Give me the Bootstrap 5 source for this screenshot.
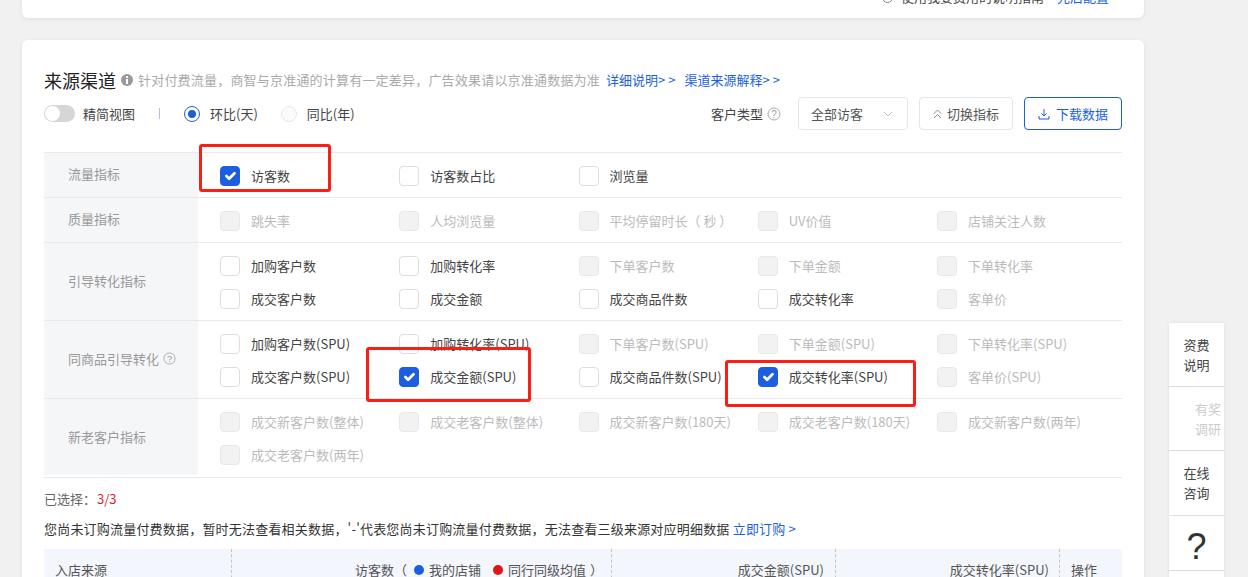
<!DOCTYPE html>
<html lang="zh">
<head>
<meta charset="utf-8">
<title>来源渠道</title>
<link href="https://cdn.jsdelivr.net/npm/bootstrap@5.3.0/dist/css/bootstrap.min.css" rel="stylesheet">
<style>
html,body{height:577px;overflow:hidden}
body{position:relative;background:#f1f1f1;font-family:"Noto Sans CJK SC","Liberation Sans",sans-serif;font-size:13px;color:#444;line-height:20px}
.page-wrap{width:1122px;margin-left:22px}
.panel{background:#fff;border-radius:6px;box-shadow:0 1px 4px rgba(0,0,0,.08)}
.panel-top{height:40px;margin-top:-22px;padding:0 35px 11px 0;white-space:nowrap}
.panel-main{margin-top:22px;padding:30px 22px 0;height:600px}
.ring{width:11px;height:11px;border:1px solid #888;border-radius:50%;display:inline-block}
.blue{color:#1b5fe0;text-decoration:none}
.head-link{margin-left:6px}
.wide-arrows{letter-spacing:3px}
.section-title{font-size:18px;color:#222;line-height:20px}
.hint{color:#aaa;letter-spacing:.2px}
.toolbar{height:33px;margin-top:7px;margin-bottom:22px}
.toggle-off{width:31px;height:17px;border-radius:9px;background:#d6d6d6;position:relative;display:inline-block}
.toggle-off::before{content:"";position:absolute;left:1px;top:1px;width:15px;height:15px;border-radius:50%;background:#fff}
.pipe{width:1px;height:11px;background:#a9c4ea;margin:0 24px 0 24px}
.radio-on,.radio-off{width:16px;height:16px;border-radius:50%;display:inline-block;flex:none}
.radio-on{border:1px solid #1b5fe0;position:relative;margin-right:10px}
.radio-on::after{content:"";position:absolute;left:3px;top:3px;width:8px;height:8px;border-radius:50%;background:#1b5fe0}
.radio-off{border:1px solid #e8e8e8;background:#fbfbfb;margin-left:23px;margin-right:10px}
.btn-soft{height:33px;border:1px solid #e3e5ea;border-radius:4px;background:#fff;color:#555;font-size:13px;line-height:20px;padding:0}
.w-sel{width:110px;margin-left:17px;justify-content:space-between;padding:0 14px 0 12px}
.w-switch{width:94px;margin-left:11px;justify-content:center;gap:5px}
.w-down{width:98px;margin-left:11px;justify-content:center;gap:6px;border-color:#1b5fe0;color:#1b5fe0}
.metric-box{border-top:1px solid #e9e9e9}
.metric-row{border-bottom:1px solid #e9e9e9;display:flex}
.metric-label{width:154px;flex:none;background:#f5f6f8;color:#999;padding:0 0 2px 24px;display:flex;align-items:center;gap:4px}
.metric-grid{display:grid;grid-template-columns:repeat(5,179.25px);padding:6px 0 5px 22px;flex:1}
.row-last .metric-grid{padding-bottom:6px}
.row-last .metric-label{margin-bottom:2px;padding-bottom:0}
.metric-item{height:33px;display:flex;align-items:center;gap:11px;white-space:nowrap}
.metric-item .form-check-input{width:20px;height:20px;margin:0;flex:none;border:1px solid #dedede;border-radius:4px;opacity:1}
.metric-item .form-check-input:checked{background-color:#1b5fe0;border-color:#1b5fe0}
.metric-item .form-check-input:disabled{background-color:#f2f2f2;border-color:#e8e8e8;opacity:1}
.metric-item.off{color:#bbb}
.picked{color:#666;margin-top:11px}
.picked b{color:#e01d2c;font-weight:400;margin-left:1px}
.notice{margin-top:10px;color:#333;letter-spacing:.2px}
.head-strip{display:flex;background:#f3f6fc;height:40px;margin-top:10px;color:#555;line-height:41px;white-space:nowrap}
.head-cell{border-right:1px dashed #c4c4c4;text-align:right;padding-right:11px;height:40px}
.c1{width:188px;text-align:left;padding-left:11px}
.c2{width:380px;padding-right:8px}
.c3{width:224px}
.c4{width:224px;padding-right:10px}
.c5{border:0;padding-left:11px;text-align:left}
.dot{display:inline-block;width:10px;height:10px;border-radius:50%;margin:0 5px 0 12px}
.dot-b{background:#1b5fe0;margin-left:7px}
.dot-r{background:#e01515}
.red-mark{position:absolute;border:3px solid #fa1e14;border-radius:3px;pointer-events:none}
.m1{left:199px;top:144px;width:132px;height:48px}
.m2{left:366px;top:347px;width:165px;height:55px}
.m3{left:725px;top:360px;width:191px;height:47px}
.side-rail{position:absolute;left:1169px;top:323px;width:55px;background:#fff;box-shadow:0 0 4px rgba(0,0,0,.08)}
.rail-item{height:64px;border-bottom:1px solid #dedede;display:flex;align-items:center;justify-content:center;text-align:center;color:#444}
.rail-item.dim{color:#ccc;justify-content:flex-end;padding-right:3px}
.rail-item.tall{height:65px}
.rail-q{height:55px;padding-top:8px;font:36px/1 "Liberation Sans",sans-serif;color:#333}
.rail-end{height:10px}
</style>
</head>
<body>
<div class="page-wrap">
  <div class="panel panel-top d-flex align-items-end justify-content-end">
    <span class="d-inline-flex align-items-center"><span class="ring me-2"></span><span>使用我要费用的说明指南·</span><a class="blue" href="#">先后配置</a></span>
  </div>
  <div class="panel panel-main">
    <div class="d-flex align-items-center">
      <span class="section-title">来源渠道</span>
      <svg class="ms-1 me-1" width="14" height="14" viewBox="0 0 14 14"><circle cx="7" cy="7" r="6" fill="#999"/><rect x="6" y="6" width="2" height="5" fill="#fff"/><rect x="6" y="3" width="2" height="2" fill="#fff"/></svg>
      <span class="hint">针对付费流量，商智与京准通的计算有一定差异，广告效果请以京准通数据为准</span>
      <a class="blue head-link" href="#">详细说明<span class="wide-arrows">&gt;&gt;</span></a>
      <a class="blue head-link" href="#">渠道来源解释<span class="wide-arrows">&gt;&gt;</span></a>
    </div>
    <div class="toolbar d-flex align-items-center">
      <span class="toggle-off me-2"></span><span>精简视图</span>
      <span class="pipe"></span>
      <span class="radio-on"></span><span>环比(天)</span>
      <span class="radio-off"></span><span>同比(年)</span>
      <span class="ms-auto">客户类型</span>
      <svg class="ms-1" width="14" height="14" viewBox="0 0 14 14"><circle cx="7" cy="7" r="6" fill="none" stroke="#aaa"/><text x="7" y="10.5" font-size="10" text-anchor="middle" fill="#999" font-family="Liberation Sans">?</text></svg>
      <button class="btn-soft w-sel d-flex align-items-center" type="button"><span>全部访客</span><svg width="10" height="6" viewBox="0 0 10 6"><path d="M1 1l4 4 4-4" fill="none" stroke="#bbb"/></svg></button>
      <button class="btn-soft w-switch d-flex align-items-center" type="button"><svg width="9" height="10" viewBox="0 0 9 10"><path d="M1 4.500l3.500-3.500 3.500 3.500M1 9l3.500-3.500L8 9" fill="none" stroke="#888"/></svg><span>切换指标</span></button>
      <button class="btn-soft w-down d-flex align-items-center" type="button"><svg width="12" height="12" viewBox="0 0 12 12"><path d="M6 1v7M3.500 5.500L6 8l2.500-2.500M1 8v3h10V8" fill="none" stroke="#1b5fe0"/></svg><span>下载数据</span></button>
    </div>

    <div class="metric-box">
      <div class="metric-row">
        <div class="metric-label">流量指标</div>
        <div class="metric-grid">
          <label class="metric-item"><input class="form-check-input" type="checkbox" checked>访客数</label>
          <label class="metric-item"><input class="form-check-input" type="checkbox">访客数占比</label>
          <label class="metric-item"><input class="form-check-input" type="checkbox">浏览量</label>
        </div>
      </div>
      <div class="metric-row">
        <div class="metric-label">质量指标</div>
        <div class="metric-grid">
          <label class="metric-item off"><input class="form-check-input" type="checkbox" disabled>跳失率</label>
          <label class="metric-item off"><input class="form-check-input" type="checkbox" disabled>人均浏览量</label>
          <label class="metric-item off"><input class="form-check-input" type="checkbox" disabled>平均停留时长（ 秒 ）</label>
          <label class="metric-item off"><input class="form-check-input" type="checkbox" disabled>UV价值</label>
          <label class="metric-item off"><input class="form-check-input" type="checkbox" disabled>店铺关注人数</label>
        </div>
      </div>
      <div class="metric-row">
        <div class="metric-label">引导转化指标</div>
        <div class="metric-grid">
          <label class="metric-item"><input class="form-check-input" type="checkbox">加购客户数</label>
          <label class="metric-item"><input class="form-check-input" type="checkbox">加购转化率</label>
          <label class="metric-item off"><input class="form-check-input" type="checkbox" disabled>下单客户数</label>
          <label class="metric-item off"><input class="form-check-input" type="checkbox" disabled>下单金额</label>
          <label class="metric-item off"><input class="form-check-input" type="checkbox" disabled>下单转化率</label>
          <label class="metric-item"><input class="form-check-input" type="checkbox">成交客户数</label>
          <label class="metric-item"><input class="form-check-input" type="checkbox">成交金额</label>
          <label class="metric-item"><input class="form-check-input" type="checkbox">成交商品件数</label>
          <label class="metric-item"><input class="form-check-input" type="checkbox">成交转化率</label>
          <label class="metric-item off"><input class="form-check-input" type="checkbox" disabled>客单价</label>
        </div>
      </div>
      <div class="metric-row">
        <div class="metric-label">同商品引导转化<svg width="13" height="13" viewBox="0 0 14 14"><circle cx="7" cy="7" r="6" fill="none" stroke="#aaa"/><text x="7" y="10.5" font-size="10" text-anchor="middle" fill="#999" font-family="Liberation Sans">?</text></svg></div>
        <div class="metric-grid">
          <label class="metric-item"><input class="form-check-input" type="checkbox">加购客户数(SPU)</label>
          <label class="metric-item"><input class="form-check-input" type="checkbox">加购转化率(SPU)</label>
          <label class="metric-item off"><input class="form-check-input" type="checkbox" disabled>下单客户数(SPU)</label>
          <label class="metric-item off"><input class="form-check-input" type="checkbox" disabled>下单金额(SPU)</label>
          <label class="metric-item off"><input class="form-check-input" type="checkbox" disabled>下单转化率(SPU)</label>
          <label class="metric-item"><input class="form-check-input" type="checkbox">成交客户数(SPU)</label>
          <label class="metric-item"><input class="form-check-input" type="checkbox" checked>成交金额(SPU)</label>
          <label class="metric-item"><input class="form-check-input" type="checkbox">成交商品件数(SPU)</label>
          <label class="metric-item"><input class="form-check-input" type="checkbox" checked>成交转化率(SPU)</label>
          <label class="metric-item off"><input class="form-check-input" type="checkbox" disabled>客单价(SPU)</label>
        </div>
      </div>
      <div class="metric-row row-last">
        <div class="metric-label">新老客户指标</div>
        <div class="metric-grid">
          <label class="metric-item off"><input class="form-check-input" type="checkbox" disabled>成交新客户数(整体)</label>
          <label class="metric-item off"><input class="form-check-input" type="checkbox" disabled>成交老客户数(整体)</label>
          <label class="metric-item off"><input class="form-check-input" type="checkbox" disabled>成交新客户数(180天)</label>
          <label class="metric-item off"><input class="form-check-input" type="checkbox" disabled>成交老客户数(180天)</label>
          <label class="metric-item off"><input class="form-check-input" type="checkbox" disabled>成交新客户数(两年)</label>
          <label class="metric-item off"><input class="form-check-input" type="checkbox" disabled>成交老客户数(两年)</label>
        </div>
      </div>
    </div>

    <div class="picked">已选择：<b>3/3</b></div>
    <div class="notice">您尚未订购流量付费数据，暂时无法查看相关数据，'-'代表您尚未订购流量付费数据，无法查看三级来源对应明细数据 <a class="blue" href="#">立即订购 &gt;</a></div>

    <div class="head-strip">
      <div class="head-cell c1">入店来源</div>
      <div class="head-cell c2">访客数（<span class="dot dot-b"></span>我的店铺<span class="dot dot-r"></span>同行同级均值<span class="ms-1">）</span></div>
      <div class="head-cell c3">成交金额(SPU)</div>
      <div class="head-cell c4">成交转化率(SPU)</div>
      <div class="head-cell c5">操作</div>
    </div>
  </div>
</div>

<div class="red-mark m1"></div>
<div class="red-mark m2"></div>
<div class="red-mark m3"></div>

<div class="side-rail">
  <div class="rail-item">资费<br>说明</div>
  <div class="rail-item dim">有奖<br>调研</div>
  <div class="rail-item tall">在线<br>咨询</div>
  <div class="rail-item rail-q">?</div>
  <div class="rail-end"></div>
</div>
<script src="https://cdn.jsdelivr.net/npm/bootstrap@5.3.0/dist/js/bootstrap.bundle.min.js"></script>
</body>
</html>
